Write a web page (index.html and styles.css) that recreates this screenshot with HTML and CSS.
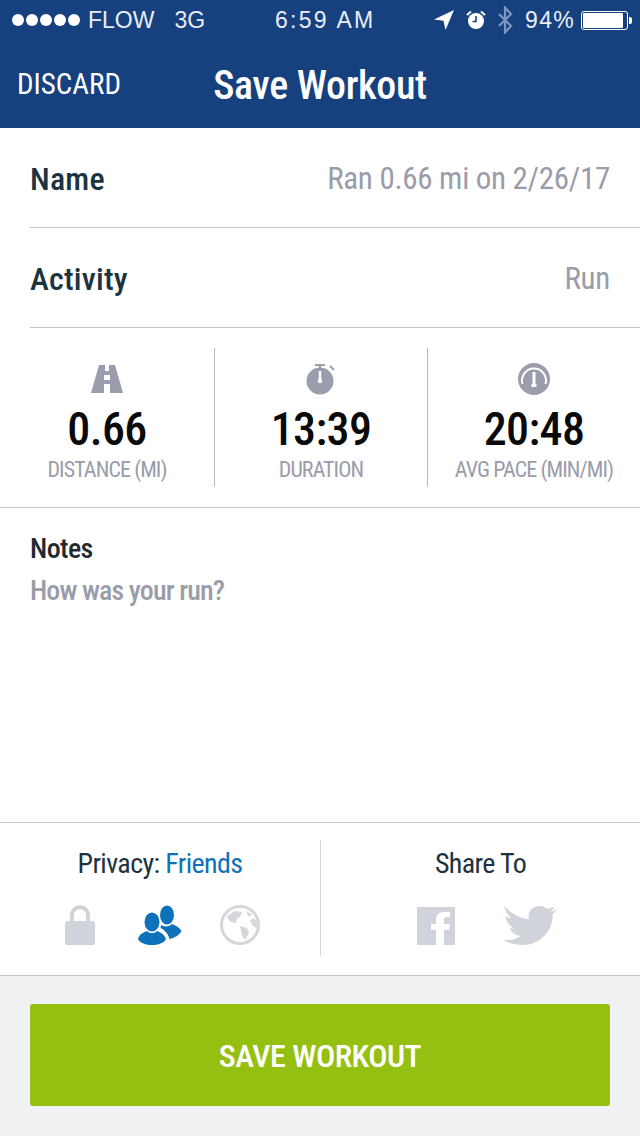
FILE: index.html
```html
<!DOCTYPE html>
<html lang="en">
<head>
  <meta charset="UTF-8" />
  <title>Save Workout</title>
  <link rel="stylesheet" href="styles.css">
</head>
<body>
  <div class="screen">
    <header class="top">
      <div class="status">
        <div class="status-left">
          <span class="dots"><i></i><i></i><i></i><i></i><i></i></span>
          <span>FLOW</span>
          <span class="net">3G</span>
        </div>
        <div class="status-time">6:59 AM</div>
        <div class="status-right">
          <svg class="ico-arrow" viewBox="0 0 20 20"><path d="M20 0L0 9.500l9.500 1.200L11.500 20z" fill="#fff"/></svg>
          <svg class="ico-alarm" viewBox="0 0 20 20">
            <circle cx="10" cy="11" r="8" fill="#fff"/>
            <path d="M10 6v5.500H6.500" fill="none" stroke="#17407f" stroke-width="1.600"/>
            <path d="M1 5l4-3.500M19 5l-4-3.500" stroke="#fff" stroke-width="2" fill="none"/>
          </svg>
          <svg class="ico-bt" viewBox="0 0 16 28"><path d="M2 8l12 12-6 6.500V1.500L14 8 2 20" fill="none" stroke="#7d97c0" stroke-width="2.200"/></svg>
          <span class="batt-text">94%</span>
          <span class="batt"><span class="batt-fill"></span></span>
          <span class="batt-tip"></span>
        </div>
      </div>
      <div class="nav">
        <span class="discard">DISCARD</span>
        <span class="nav-title">Save Workout</span>
      </div>
    </header>

    <div class="row">
      <span class="row-label">Name</span>
      <span class="row-value">Ran 0.66 mi on 2/26/17</span>
    </div>
    <div class="row">
      <span class="row-label">Activity</span>
      <span class="row-value">Run</span>
    </div>

    <div class="stats">
      <div class="stat">
        <svg class="stat-ico" viewBox="0 0 32 32"><path fill-rule="evenodd" d="M8 2h6v6h4V2h6l8 28H19v-9h-6v9H0zM13 12v5h6v-5z" fill="#9a9dab"/></svg>
        <div class="stat-num">0.66</div>
        <div class="stat-cap">DISTANCE (MI)</div>
      </div>
      <div class="stat">
        <svg class="stat-ico" viewBox="0 0 32 32">
          <circle cx="15" cy="18" r="13.500" fill="#9a9dab"/>
          <path d="M10 2h10M15 2v4M25 3l4 4" stroke="#9a9dab" stroke-width="2" fill="none"/>
          <path d="M15 8v9" stroke="#fff" stroke-width="2.500"/>
          <circle cx="15" cy="18" r="2.200" fill="#fff"/>
        </svg>
        <div class="stat-num">13:39</div>
        <div class="stat-cap">DURATION</div>
      </div>
      <div class="stat">
        <svg class="stat-ico" viewBox="0 0 32 32">
          <circle cx="16" cy="16" r="16" fill="#9a9dab"/>
          <path d="M4.500 21a12 12 0 1 1 23 0" fill="none" stroke="#fff" stroke-width="2"/>
          <path d="M16 9v14" stroke="#fff" stroke-width="3"/>
          <rect x="13.500" y="21" width="5" height="3" fill="#fff"/>
        </svg>
        <div class="stat-num">20:48</div>
        <div class="stat-cap">AVG PACE (MIN/MI)</div>
      </div>
    </div>

    <div class="notes">
      <div class="notes-label">Notes</div>
      <div class="notes-hint">How was your run?</div>
    </div>

    <div class="options">
      <div class="opt">
        <div class="opt-title">Privacy: <span class="blue">Friends</span></div>
        <div class="opt-icons privacy-icons">
          <svg class="ico-lock" viewBox="0 0 30 40">
            <path d="M7 18V10a8 8 0 0 1 16 0v8" fill="none" stroke="#d1d3da" stroke-width="4"/>
            <rect x="0" y="16" width="30" height="24" rx="2" fill="#d1d3da"/>
          </svg>
          <svg class="ico-friends" viewBox="0 0 44 40">
            <ellipse cx="14" cy="17" rx="7.500" ry="9.500" fill="#0d72b9"/>
            <ellipse cx="29" cy="10" rx="7" ry="9.500" fill="#0d72b9"/>
            <path d="M0 34c2-6 7-7 9-8 3 3 7 3 10 0 3 1 7 3 9 8-2 4-8 6-14 6S2 38 0 34z" fill="#0d72b9"/>
            <path d="M23 20c3 2 8 2 11-1 3 1 7 3 9.500 7-2 4-7 7-12 8-1-5-5-9-9-11z" fill="#0d72b9"/>
          </svg>
          <svg class="ico-globe" viewBox="0 0 40 40">
            <circle cx="20" cy="20" r="18.500" fill="none" stroke="#d5d7dd" stroke-width="3"/>
            <path d="M7 11l8-5 7 1-2 5-3 1-1 5-5-1-3-3zM20 21l7 2 2 5-4 7-3-4zM26 6l6 3-3 3zM33 13l4 3v7l-4-2-3-5z" fill="#d5d7dd"/>
          </svg>
        </div>
      </div>
      <div class="opt">
        <div class="opt-title">Share To</div>
        <div class="opt-icons share-icons">
          <svg class="ico-fb" viewBox="0 0 38 38">
            <path d="M1 0h36a1 1 0 0 1 1 1v36a1 1 0 0 1-1 1H27V23h5l1-6h-6v-4c0-2 1-3 3-3h3V5h-6c-5 0-8 3-8 8v4h-5v6h5v15H1a1 1 0 0 1-1-1V1a1 1 0 0 1 1-1z" fill="#d1d3da"/>
          </svg>
          <svg class="ico-tw" viewBox="0 0 56 40">
            <path d="M55 4l-5 5c0 1 0 1 0 2C50 24 39 39 21 39 13 39 7 37 2 34c8 1 13-1 17-4-5 0-9-3-11-7h5C8 21 5 17 4 11c2 1 4 2 6 2C6 9 3 5 3 1c6 7 15 12 24 13-2-8 4-13 10-13 3 0 6 1 8 3l7-2-4 5z" fill="#d1d3da"/>
          </svg>
        </div>
      </div>
    </div>

    <footer class="bottom">
      <button class="save">SAVE WORKOUT</button>
    </footer>
  </div>
</body>
</html>
```
FILE: styles.css
```css
* {
  box-sizing: border-box;
}

html, body {
  margin: 0;
  padding: 0;
}

body {
  font-family: Roboto, "Liberation Sans", sans-serif;
  font-stretch: condensed;
  background: #fff;
}

.screen {
  width: 640px;
  height: 1136px;
  display: flex;
  flex-direction: column;
  overflow: hidden;
}

.top {
  background: #17407f;
  color: #fff;
  height: 128px;
  flex: none;
}

.status {
  height: 40px;
  padding: 0 8px 0 12px;
  display: flex;
  align-items: center;
  justify-content: space-between;
  position: relative;
  font-family: "Liberation Sans", sans-serif;
  font-stretch: normal;
  font-size: 23px;
  color: #e9edf4;
}

.status-left {
  display: flex;
  align-items: center;
  gap: 8px;
}

.net {
  margin-left: 12px;
}

.dots {
  display: flex;
  gap: 2px;
}

.dots i {
  width: 12px;
  height: 12px;
  border-radius: 50%;
  background: #fff;
}

.status-time {
  position: absolute;
  left: 275px;
  top: 7px;
  letter-spacing: 2.300px;
}

.status-right {
  display: flex;
  align-items: center;
}

.ico-arrow {
  width: 20px;
  height: 20px;
}

.ico-alarm {
  width: 20px;
  height: 20px;
  margin-left: 12px;
}

.ico-bt {
  width: 16px;
  height: 28px;
  margin-left: 11px;
}

.batt-text {
  margin-left: 12px;
  letter-spacing: 1.300px;
}

.batt {
  width: 47px;
  height: 19px;
  border: 1px solid #fff;
  border-radius: 3px;
  padding: 1px;
  margin-left: 6px;
  display: flex;
}

.batt-fill {
  width: 94%;
  background: #fff;
  border-radius: 1px;
}

.batt-tip {
  width: 3px;
  height: 7px;
  background: #fff;
  border-radius: 0 2px 2px 0;
  margin-left: 1px;
}

.nav {
  height: 88px;
  padding: 0 18px 0 17px;
  position: relative;
  display: flex;
  align-items: center;
}

.discard {
  font-size: 29px;
}

.nav-title {
  position: absolute;
  left: 0;
  right: 0;
  top: 22px;
  text-align: center;
  font-size: 40px;
  font-weight: 500;
  letter-spacing: -0.350px;
}

.row {
  height: 100px;
  margin-left: 30px;
  padding: 2px 30px 0 0;
  border-bottom: 1px solid #c4c6ca;
  display: flex;
  align-items: center;
  justify-content: space-between;
  flex: none;
}

.row-label {
  font-size: 32px;
  font-weight: 500;
  letter-spacing: 0.200px;
  color: #1c3340;
}

.row-value {
  font-size: 31px;
  letter-spacing: -0.300px;
  color: #9a9da9;
}

.stats {
  height: 180px;
  flex: none;
  padding: 20px 0;
  display: grid;
  grid-template-columns: 215px 213px 212px;
  border-bottom: 1px solid #c4c6ca;
}

.stat {
  display: flex;
  flex-direction: column;
  align-items: center;
  border-right: 1px solid #b9bbbf;
}

.stat:last-child {
  border-right: 0;
}

.stat-ico {
  width: 32px;
  height: 32px;
  margin-top: 15px;
}

.stat-num {
  font-size: 46px;
  font-weight: 500;
  letter-spacing: -0.600px;
  color: #0a0a0a;
  line-height: 52px;
  margin-top: 8px;
}

.stat-cap {
  font-size: 22px;
  letter-spacing: -0.900px;
  color: #9a9da9;
  line-height: 26px;
  margin-top: 2px;
}

.notes {
  height: 315px;
  flex: none;
  padding: 23px 30px 0;
  border-bottom: 1px solid #c4c6ca;
}

.notes-label {
  font-size: 28px;
  font-weight: 500;
  letter-spacing: -0.600px;
  color: #1f2a30;
  line-height: 36px;
}

.notes-hint {
  font-size: 28px;
  font-weight: 500;
  letter-spacing: -0.900px;
  color: #9a9da9;
  line-height: 36px;
  margin-top: 6px;
}

.options {
  height: 153px;
  flex: none;
  padding: 17px 0 19px;
  display: grid;
  grid-template-columns: 321px 319px;
  border-bottom: 1px solid #c4c6ca;
}

.opt {
  display: flex;
  flex-direction: column;
  align-items: center;
}

.opt:first-child {
  border-right: 1px solid #d5d6d9;
}

.opt-title {
  font-size: 28px;
  letter-spacing: -0.600px;
  color: #21323f;
  line-height: 34px;
  margin-top: 7px;
}

.blue {
  color: #0d72b9;
}

.opt-icons {
  display: flex;
  align-items: center;
  margin-top: 24px;
}

.privacy-icons {
  margin-left: 4px;
}

.share-icons {
  gap: 46px;
  margin-left: 14px;
}

.ico-lock {
  width: 30px;
  height: 40px;
}

.ico-friends {
  width: 44px;
  height: 40px;
  margin: 0 38px 0 43px;
}

.ico-globe {
  width: 40px;
  height: 40px;
}

.ico-fb {
  width: 38px;
  height: 38px;
}

.ico-tw {
  width: 58px;
  height: 41px;
}

.bottom {
  flex: 1;
  background: #eff1f3;
  padding: 28px 30px 0;
}

.save {
  width: 100%;
  height: 102px;
  border: 0;
  padding: 2px 0 0;
  border-radius: 3px;
  background: #95c011;
  color: #fff;
  font-family: inherit;
  font-stretch: condensed;
  font-size: 32px;
  font-weight: 500;
  letter-spacing: -0.500px;
}
```
